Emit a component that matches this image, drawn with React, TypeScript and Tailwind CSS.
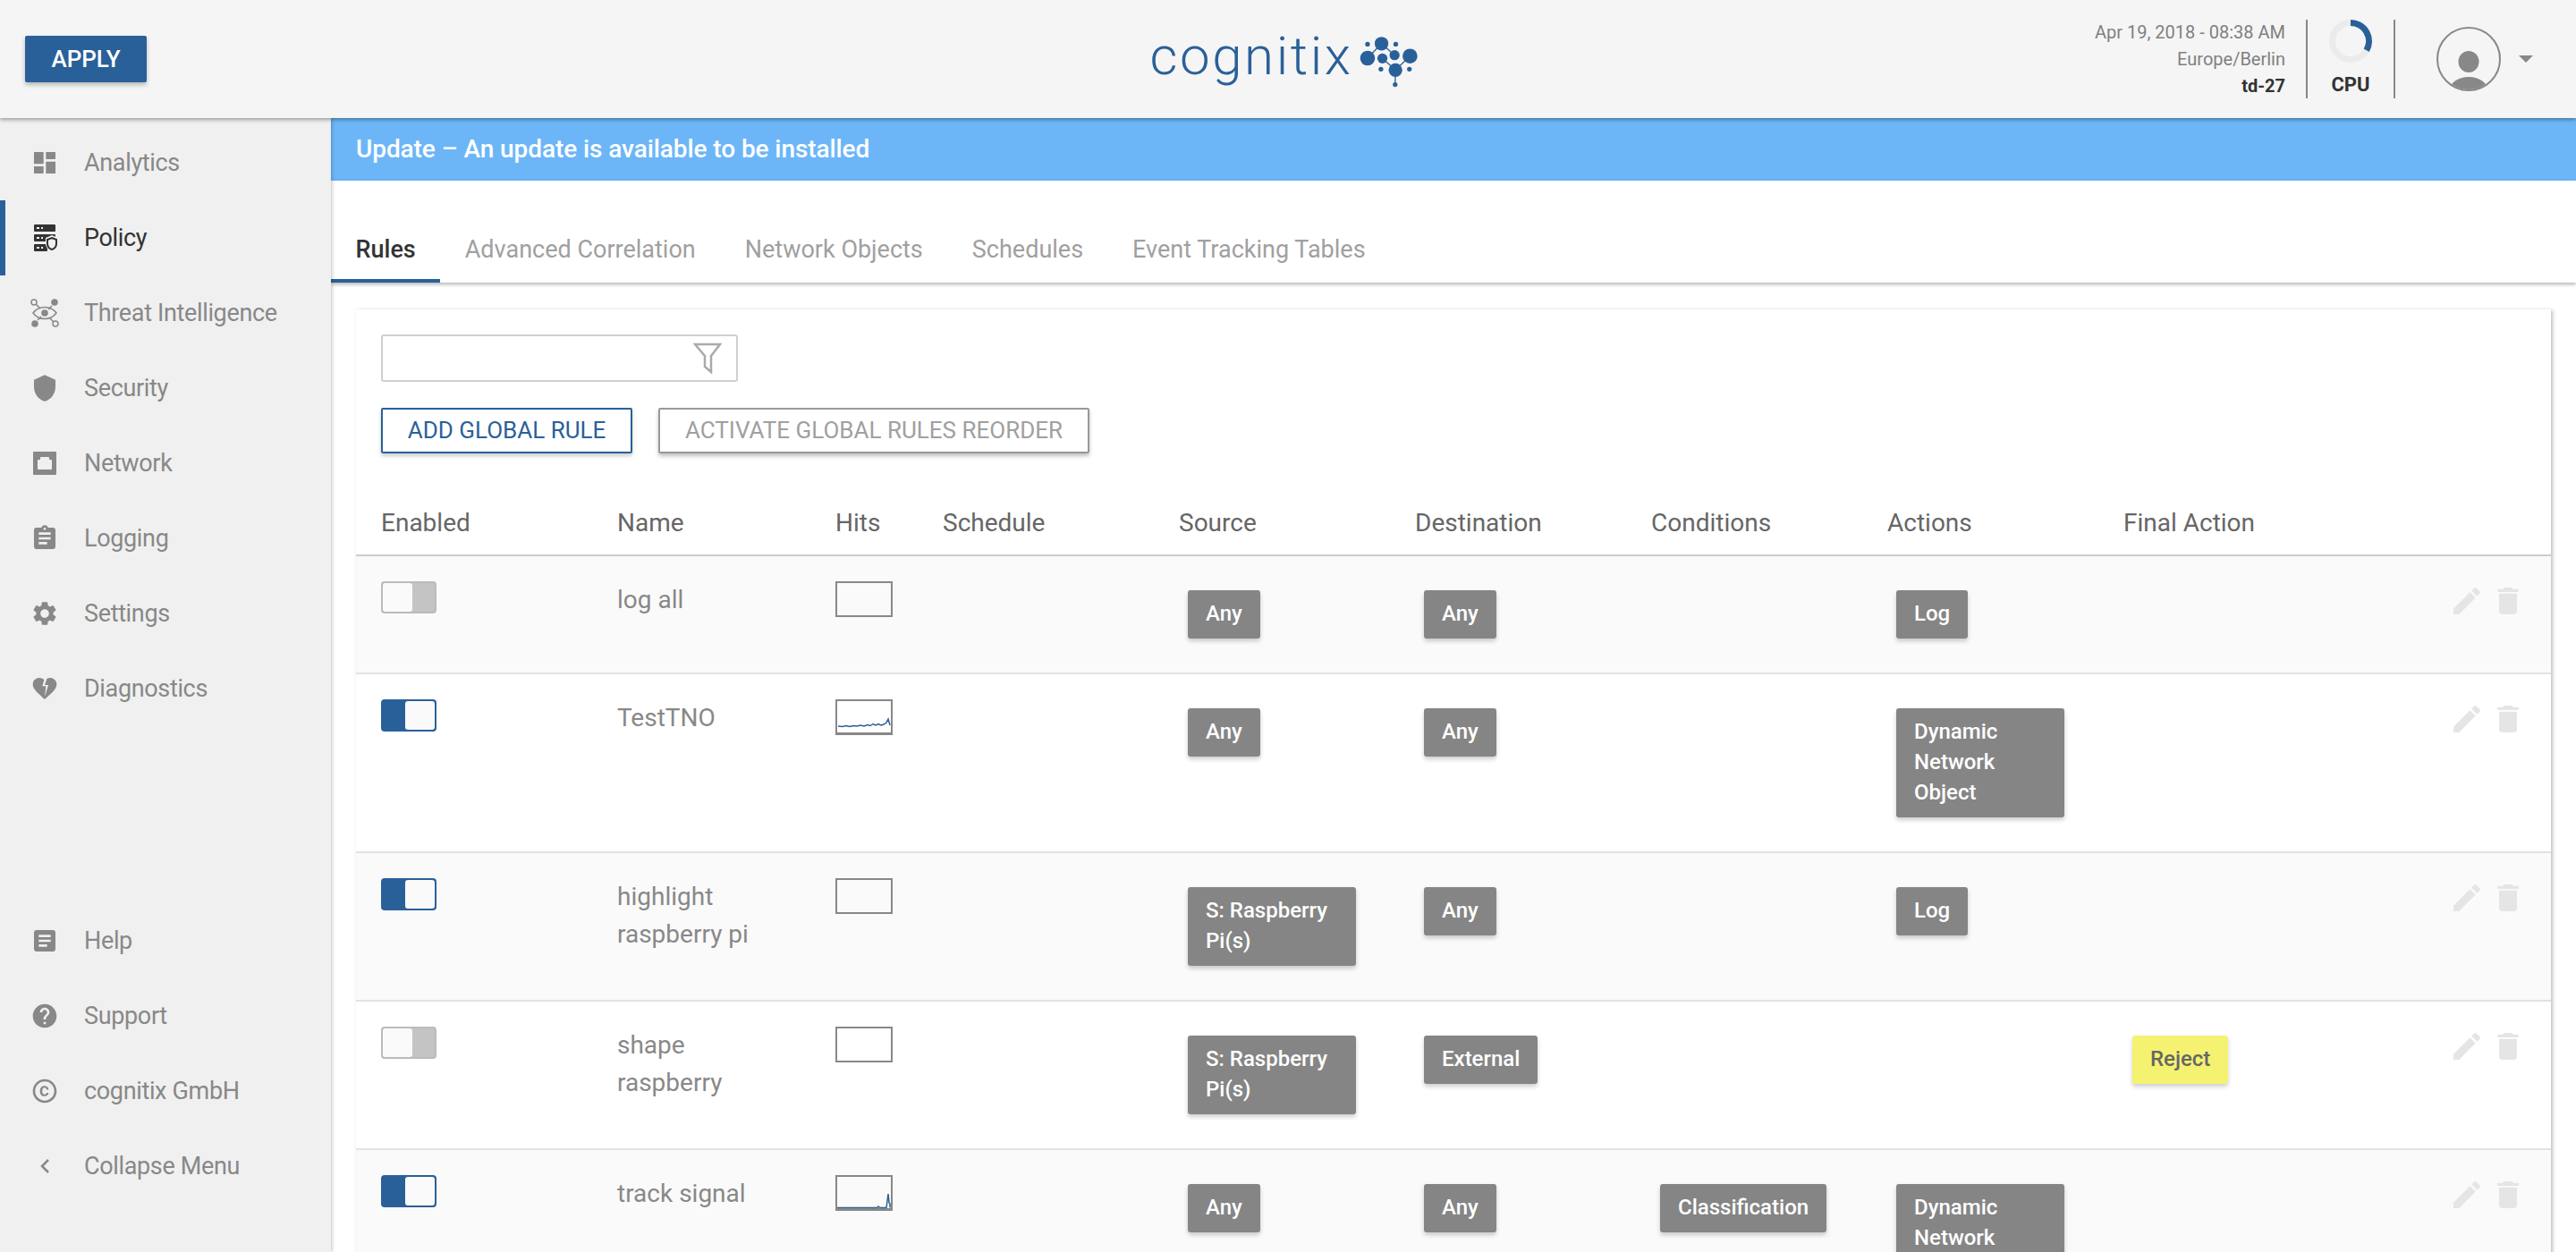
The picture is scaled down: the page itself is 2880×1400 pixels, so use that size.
import type { ReactNode } from "react";
import {
  MdAssignment,
  MdArticle,
  MdCopyright,
  MdDashboard,
  MdDelete,
  MdEdit,
  MdHeartBroken,
  MdHelp,
  MdSettings,
} from "react-icons/md";

function ShieldIcon() {
  return (
    <svg width="32" height="32" viewBox="0 0 24 24">
      <path
        fill="currentColor"
        d="M12 1L3 5v6c0 5.550 3.840 10.740 9 12 5.160-1.260 9-6.450 9-12V5l-9-4z"
      />
    </svg>
  );
}

function NetworkIcon() {
  return (
    <svg width="32" height="32" viewBox="0 0 32 32">
      <path
        fillRule="evenodd"
        fill="currentColor"
        d="M4 3h24a1 1 0 0 1 1 1v24a1 1 0 0 1-1 1H4a1 1 0 0 1-1-1V4a1 1 0 0 1 1-1zm7 7v2H9a1 1 0 0 0-1 1v9a1 1 0 0 0 1 1h14a1 1 0 0 0 1-1v-9a1 1 0 0 0-1-1h-2v-2a1 1 0 0 0-1-1h-8a1 1 0 0 0-1 1z"
      />
    </svg>
  );
}

function PolicyIcon() {
  return (
    <svg width="32" height="32" viewBox="0 0 32 32">
      <rect x="4" y="1" width="24" height="8" rx="1" fill="currentColor" />
      <rect x="4" y="12" width="24" height="8" rx="1" fill="currentColor" />
      <rect x="4" y="23" width="15" height="8" rx="1" fill="currentColor" />
      <rect x="7" y="4" width="3" height="2" fill="#f0f0f0" />
      <rect x="12" y="4" width="2" height="2" fill="#f0f0f0" />
      <rect x="7" y="15" width="3" height="2" fill="#f0f0f0" />
      <rect x="12" y="15" width="2" height="2" fill="#f0f0f0" />
      <rect x="7" y="26" width="3" height="2" fill="#f0f0f0" />
      <rect x="12" y="26" width="2" height="2" fill="#f0f0f0" />
      <path
        d="M24 13l7 3v6c0 4.500-3 8-7 9.500-4-1.500-7-5-7-9.500v-6z"
        fill="#f0f0f0"
      />
      <path
        d="M24 16l5 2v4.500c0 3-2.200 5.500-5 6.500-2.800-1-5-3.500-5-6.500V18z"
        fill="none"
        stroke="currentColor"
        strokeWidth="2"
      />
    </svg>
  );
}

function ThreatIcon() {
  return (
    <svg width="32" height="32" viewBox="0 0 32 32">
      <g stroke="currentColor" strokeWidth="1.500" fill="none">
        <circle cx="4" cy="4" r="3" />
        <circle cx="28" cy="28" r="3" />
        <path d="M6 6l5 5M26 26l-5-5M24 8l-4 4M8 24l4-4" />
        <path d="M3 16c3-4 8-6.500 13-6.500S26 12 29 16c-3 4-8 6.500-13 6.500S6 20 3 16z" />
      </g>
      <circle cx="16" cy="16" r="3.800" fill="currentColor" />
      <circle cx="27" cy="4" r="3.800" fill="currentColor" />
      <circle cx="5" cy="28" r="3.800" fill="currentColor" />
    </svg>
  );
}

function CollapseIcon() {
  return (
    <svg width="32" height="32" viewBox="0 0 32 32">
      <path
        d="M20 9l-7 7 7 7"
        fill="none"
        stroke="currentColor"
        strokeWidth="2.500"
      />
    </svg>
  );
}

function FilterIcon() {
  return (
    <svg width="32" height="36" viewBox="0 0 32 36" className="text-[#aaaaaa]">
      <path
        d="M2 2h28L20 15v18l-7-6V15z"
        fill="none"
        stroke="currentColor"
        strokeWidth="2.500"
      />
    </svg>
  );
}

function Logo() {
  const lines = [
    "M912 128L956 167",
    "M915 178L959 217",
    "M1008 170L959 217",
    "M865 177L912 128",
    "M959 217L958 266",
  ];
  const dots = [
    [865, 130, 8],
    [912, 128, 23],
    [960, 130, 8],
    [865, 177, 25],
    [915, 178, 17],
    [956, 167, 17],
    [1008, 170, 25],
    [959, 217, 23],
    [910, 214, 8],
    [1006, 214, 8],
    [958, 266, 8],
  ];

  return (
    <div className="flex items-center gap-[6px] pr-[8px]">
      <span className="pb-[6px] text-[60px] leading-[60px] font-light tracking-[2.600px] text-[#2a6099]">
        cognitix
      </span>
      <svg width="68" height="66" viewBox="835 90 205 198" className="mt-[6px]">
        {lines.map((d) => (
          <path key={d} d={d} stroke="#2a6099" strokeWidth="4" />
        ))}
        {dots.map(([cx, cy, r]) => (
          <circle key={`${cx}-${cy}`} cx={cx} cy={cy} r={r} fill="#2a6099" />
        ))}
      </svg>
    </div>
  );
}

function Header() {
  return (
    <header className="relative z-20 grid h-[132px] shrink-0 grid-cols-[1fr_auto_1fr] items-center bg-[#f5f5f5] shadow-[0_2px_4px_rgba(0,0,0,0.35)]">
      <div className="pl-[28px]">
        <button
          type="button"
          className="h-[52px] w-[136px] rounded-[2px] bg-[#2a6099] text-[26px] font-medium text-white shadow-[0_3px_5px_rgba(0,0,0,0.25)]"
        >
          APPLY
        </button>
      </div>

      <Logo />

      <div className="flex items-center justify-end">
        <div className="text-right text-[20px] leading-[30px] text-[#808080]">
          <p>Apr 19, 2018 - 08:38 AM</p>
          <p>Europe/Berlin</p>
          <p className="font-bold text-[#333333]">td-27</p>
        </div>
        <div className="ml-[23px] h-[88px] w-[2px] bg-[#888888]" />
        <div className="flex w-[96px] flex-col items-center">
          <svg width="48" height="48" viewBox="0 0 48 48">
            <circle
              cx="24"
              cy="24"
              r="20.500"
              fill="none"
              stroke="#ebebeb"
              strokeWidth="7"
            />
            <path
              d="M24 3.500A20.500 20.500 0 0 1 41.750 34.250"
              fill="none"
              stroke="#2a6099"
              strokeWidth="7"
            />
          </svg>
          <span className="mt-[10px] text-[22px] leading-[30px] font-bold text-[#333333]">
            CPU
          </span>
        </div>
        <div className="h-[88px] w-[2px] bg-[#888888]" />
        <div className="ml-[46px] h-[72px] w-[72px]">
          <svg width="72" height="72" viewBox="0 0 72 72">
            <defs>
              <clipPath id="avatar-clip">
                <circle cx="36" cy="36" r="34" />
              </clipPath>
            </defs>
            <circle
              cx="36"
              cy="36"
              r="35"
              fill="none"
              stroke="#888888"
              strokeWidth="2"
            />
            <ellipse cx="36" cy="39" rx="11.500" ry="12" fill="#888888" />
            <ellipse
              cx="36"
              cy="72"
              rx="22"
              ry="16"
              fill="#888888"
              clipPath="url(#avatar-clip)"
            />
          </svg>
        </div>
        <div className="mr-[48px] ml-[20px] h-0 w-0 border-x-[8px] border-t-[8px] border-x-transparent border-t-[#888888]" />
      </div>
    </header>
  );
}

type NavItem = { label: string; icon: ReactNode; active?: boolean };

const topNav: NavItem[] = [
  { label: "Analytics", icon: <MdDashboard size={32} /> },
  { label: "Policy", icon: <PolicyIcon />, active: true },
  { label: "Threat Intelligence", icon: <ThreatIcon /> },
  { label: "Security", icon: <ShieldIcon /> },
  { label: "Network", icon: <NetworkIcon /> },
  { label: "Logging", icon: <MdAssignment size={32} /> },
  { label: "Settings", icon: <MdSettings size={32} /> },
  { label: "Diagnostics", icon: <MdHeartBroken size={32} /> },
];

const bottomNav: NavItem[] = [
  { label: "Help", icon: <MdArticle size={32} /> },
  { label: "Support", icon: <MdHelp size={32} /> },
  { label: "cognitix GmbH", icon: <MdCopyright size={32} /> },
  { label: "Collapse Menu", icon: <CollapseIcon /> },
];

function NavRow({ item }: { item: NavItem }) {
  return (
    <div
      className={`flex h-[84px] items-center border-l-[6px] pl-[28px] text-[27px] tracking-[-0.350px] ${
        item.active
          ? "border-[#2a6099] text-[#333333]"
          : "border-transparent text-[#888888]"
      }`}
    >
      <span className="flex w-[32px] shrink-0 justify-center">{item.icon}</span>
      <span className="ml-[28px]">{item.label}</span>
    </div>
  );
}

function Sidebar() {
  return (
    <aside className="relative z-10 flex w-[370px] shrink-0 flex-col justify-between bg-[#f0f0f0] pt-[8px] pb-[54px] shadow-[1px_0_4px_rgba(0,0,0,0.25)]">
      <nav>
        {topNav.map((item) => (
          <NavRow key={item.label} item={item} />
        ))}
      </nav>
      <nav>
        {bottomNav.map((item) => (
          <NavRow key={item.label} item={item} />
        ))}
      </nav>
    </aside>
  );
}

function Toggle({ on }: { on: boolean }) {
  return (
    <div
      className={`flex h-[36px] w-[62px] rounded-[4px] border-2 ${
        on
          ? "justify-end border-[#2a6099] bg-[#2a6099]"
          : "justify-start border-[#bbbbbb] bg-[#c4c4c4]"
      }`}
    >
      <div className="h-full w-[33px] rounded-[3px] bg-[#fafafa]" />
    </div>
  );
}

function HitsBox({ spark }: { spark?: string }) {
  return (
    <div className="h-[40px] w-[64px] border-2 border-[#888888] bg-transparent">
      {spark && (
        <svg width="60" height="36" viewBox="0 0 60 36">
          <path d={spark} fill="none" stroke="#2a6099" strokeWidth="1.500" />
          <path d="M0 35.500H60" stroke="#888888" strokeWidth="1" />
        </svg>
      )}
    </div>
  );
}

function Chip({ label, yellow }: { label: string; yellow?: boolean }) {
  return (
    <div
      className={`my-[10px] ml-[10px] w-fit max-w-[188px] rounded-[3px] px-[20px] pt-[9px] pb-[11px] text-[24px] leading-[34px] font-medium shadow-[0_3px_5px_rgba(0,0,0,0.2)] ${
        yellow ? "bg-[#f5f271] text-[#666666]" : "bg-[#858585] text-white"
      }`}
    >
      {label}
    </div>
  );
}

type Rule = {
  on: boolean;
  name: string;
  spark?: string;
  source: string;
  destination: string;
  condition?: string;
  action?: string;
  finalAction?: string;
};

const rules: Rule[] = [
  { on: false, name: "log all", source: "Any", destination: "Any", action: "Log" },
  {
    on: true,
    name: "TestTNO",
    spark:
      "M1 28L6 28.500L10 27.500L14 28.500L18 27.500L22 28L26 27L30 28L34 26.500L37 27.500L40 25.500L43 27L46 25.500L49 27L52 26L55 24L57 20L59 27",
    source: "Any",
    destination: "Any",
    action: "Dynamic Network Object",
  },
  {
    on: true,
    name: "highlight raspberry pi",
    source: "S: Raspberry Pi(s)",
    destination: "Any",
    action: "Log",
  },
  {
    on: false,
    name: "shape raspberry",
    source: "S: Raspberry Pi(s)",
    destination: "External",
    finalAction: "Reject",
  },
  {
    on: true,
    name: "track signal",
    spark: "M0 34.500L45 34.500L46 33L48 34.500L55 34.500L57 19L58 29L59 30L59 34.500",
    source: "Any",
    destination: "Any",
    condition: "Classification",
    action: "Dynamic Network Object",
  },
];

const gridCols =
  "grid grid-cols-[264px_244px_120px_264px_264px_264px_264px_264px_1fr] pl-[28px] pr-[28px]";

const columns = [
  "Enabled",
  "Name",
  "Hits",
  "Schedule",
  "Source",
  "Destination",
  "Conditions",
  "Actions",
  "Final Action",
];

function RuleRow({ rule, index }: { rule: Rule; index: number }) {
  return (
    <div
      className={`${gridCols} border-b-2 border-[#e2e2e2] py-[28px] text-[28px] leading-[42px] text-[#888888] ${
        index % 2 === 0 ? "bg-[#fafafa]" : "bg-white"
      }`}
    >
      <Toggle on={rule.on} />
      <div className="max-w-[190px]">{rule.name}</div>
      <HitsBox spark={rule.spark} />
      <div />
      <div>
        <Chip label={rule.source} />
      </div>
      <div>
        <Chip label={rule.destination} />
      </div>
      <div>{rule.condition && <Chip label={rule.condition} />}</div>
      <div>{rule.action && <Chip label={rule.action} />}</div>
      <div className="flex items-start justify-between">
        <div>{rule.finalAction && <Chip label={rule.finalAction} yellow />}</div>
        <div className="mt-[2px] flex gap-[6px] text-[#e5e5e5]">
          <MdEdit size={40} />
          <MdDelete size={40} />
        </div>
      </div>
    </div>
  );
}

export default function App() {
  const tabs = [
    "Rules",
    "Advanced Correlation",
    "Network Objects",
    "Schedules",
    "Event Tracking Tables",
  ];

  return (
    <div className="flex h-screen flex-col overflow-hidden bg-white font-[Roboto,sans-serif]">
      <Header />
      <div className="flex min-h-0 flex-1">
        <Sidebar />
        <main className="min-w-0 flex-1 overflow-hidden">
          <div className="flex h-[70px] items-center bg-[#6cb6f8] pl-[28px] text-[28px] font-medium tracking-[-0.080px] text-white">
            Update – An update is available to be installed
          </div>

          <div className="relative flex h-[114px] items-end shadow-[0_2px_4px_rgba(0,0,0,0.3)]">
            {tabs.map((tab, i) => (
              <div
                key={tab}
                className={`border-b-4 px-[27.500px] pb-[12px] text-[27px] leading-[42px] ${
                  i === 0
                    ? "border-[#2a6099] font-medium text-[#333333]"
                    : "border-transparent text-[#a0a0a0]"
                }`}
              >
                {tab}
              </div>
            ))}
          </div>

          <section className="mx-[28px] mt-[30px] bg-white shadow-[2px_1px_4px_rgba(0,0,0,0.25)]">
            <div className="px-[28px] pt-[28px]">
              <div className="flex h-[53px] w-[399px] items-center justify-end rounded-[3px] border-2 border-[#cdd0d4] pr-[16px]">
                <FilterIcon />
              </div>
              <div className="mt-[29px] flex gap-[29px]">
                <button
                  type="button"
                  className="h-[51px] w-[281px] rounded-[2px] border-2 border-[#2a6099] text-[26px] text-[#2a6099] shadow-[0_3px_4px_rgba(0,0,0,0.2)]"
                >
                  ADD GLOBAL RULE
                </button>
                <button
                  type="button"
                  className="h-[51px] w-[482px] rounded-[2px] border-2 border-[#999999] text-[26px] text-[#a0a0a0] shadow-[0_3px_4px_rgba(0,0,0,0.25)]"
                >
                  ACTIVATE GLOBAL RULES REORDER
                </button>
              </div>
            </div>

            <div
              className={`${gridCols} mt-[55px] border-b-2 border-[#cccccc] pt-[2px] pb-[14px] text-[28px] leading-[42px] text-[#666666]`}
            >
              {columns.map((column) => (
                <div key={column}>{column}</div>
              ))}
            </div>

            {rules.map((rule, i) => (
              <RuleRow key={rule.name} rule={rule} index={i} />
            ))}
          </section>
        </main>
      </div>
    </div>
  );
}
